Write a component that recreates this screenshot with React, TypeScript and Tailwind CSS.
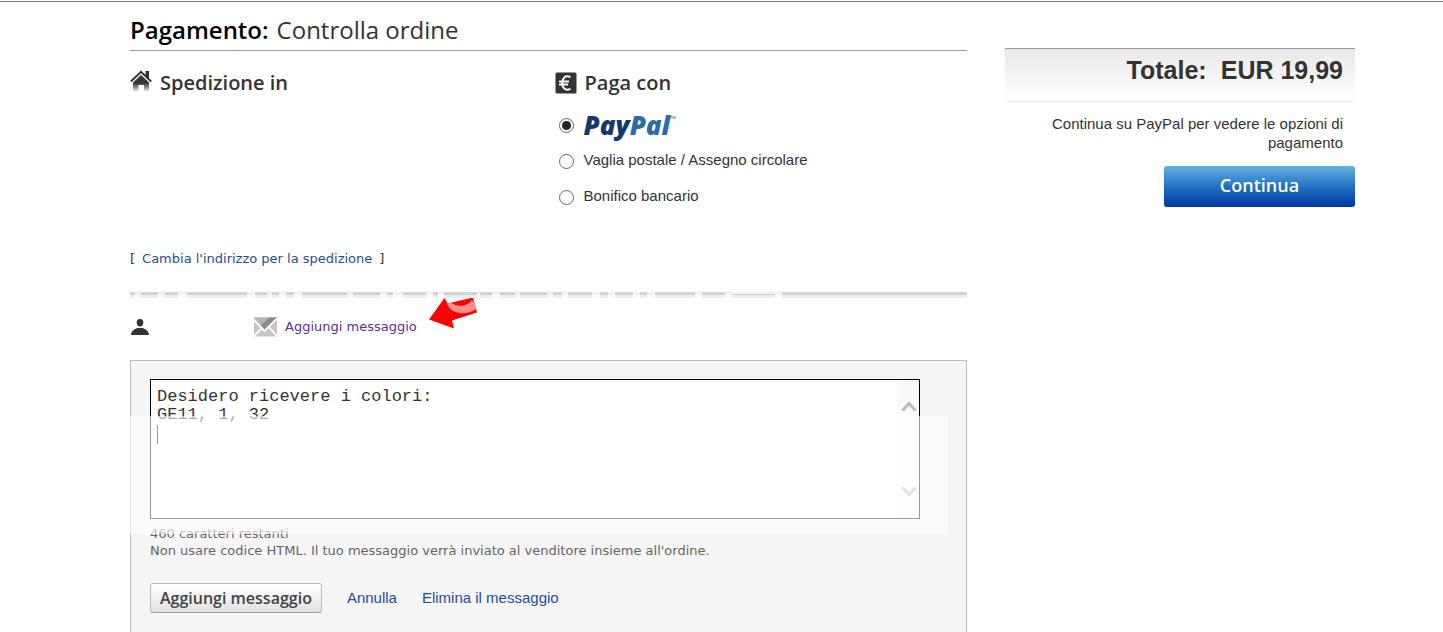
import React, { useState } from 'react';

const PAYMENTS = [
  { id: 'paypal', label: 'PayPal' },
  { id: 'vaglia', label: 'Vaglia postale / Assegno circolare' },
  { id: 'bonifico', label: 'Bonifico bancario' },
];

// light breaks along the divider: [start, width]
const BREAKS = [
  [5, 6], [28, 7], [48, 9], [117, 8], [137, 5], [149, 7], [164, 8], [217, 6],
  [250, 7], [263, 10], [296, 7], [308, 6], [347, 3], [362, 8], [385, 5], [417, 6],
  [432, 6], [462, 8], [478, 7], [503, 7], [517, 8], [565, 7], [595, 8], [645, 7],
];

const MAX_CHARS = 500;

function HouseIcon() {
  return (
    <svg width="22" height="22" viewBox="0 0 22 22" className="mb-1" aria-hidden="true">
      <defs>
        <linearGradient id="house" x1="0" y1="0" x2="0" y2="1">
          <stop offset="0.5" stopColor="#333" />
          <stop offset="1" stopColor="#333" stopOpacity="0.15" />
        </linearGradient>
      </defs>
      <path d="M11 5 19 12.500V21h-5v-6H8.500v6H3v-8.500z" fill="url(#house)" />
      <path d="M.8 11.500 11 1.800 21.200 11.500" fill="none" stroke="#333" strokeWidth="2" />
      <path d="M15.500 1H19v8l-3.500-3.300z" fill="#333" />
    </svg>
  );
}

function EuroIcon() {
  return (
    <svg width="22" height="22" viewBox="0 0 22 22" aria-hidden="true">
      <rect x="0.500" y="0.500" width="21" height="21" rx="1.500" fill="#333" />
      <path d="M15.500 5.200C10 2.500 7.200 6.500 7.200 11s2.800 8.500 8.300 5.800M4 9.500h10M4 12.500h9" fill="none" stroke="#fff" strokeWidth="2" />
    </svg>
  );
}

function PersonIcon() {
  return (
    <svg width="20" height="18" viewBox="0 0 20 18" aria-hidden="true">
      <path d="M10 1c2.300 0 3.300 1.400 3.300 3.400 0 2.200-1.400 4.200-3.300 4.200S6.700 6.600 6.700 4.400C6.700 2.400 7.700 1 10 1z" fill="#333" />
      <path d="M1 17c.5-4.500 3-5.500 6.500-7h5c3.500 1.500 6 2.500 6.500 7z" fill="#333" />
    </svg>
  );
}

function MailIcon() {
  return (
    <svg width="23" height="20" viewBox="0 0 23 20" aria-hidden="true">
      <rect width="23" height="19" y="0.500" fill="#c6c6c6" />
      <path d="M0 .5h23L11 13z" fill="#b4b4b4" />
      <path d="M23 .5 11 13 7 8.500 15 .5z" fill="#8a8a8a" />
      <path d="M0 3 10.500 14 23 1.500M0 19 8 11M23 19l-8-9" fill="none" stroke="#fff" strokeWidth="1.800" />
    </svg>
  );
}

function RedArrow() {
  return (
    <svg width="48" height="32" viewBox="0 0 48 32" aria-hidden="true">
      <path d="M0 22.500 15.500 1l3 5.500L44 .5l4 15L23 23.500l2 8z" fill="#f00" />
      <path d="M18 6.600c3 10 18 13 29 5.400L45.500 6.500 43 3c-4 6-14 8-21 2.800z" fill="#ff8f8f" />
    </svg>
  );
}

function PayPalLogo() {
  return (
    <span className="flex items-start font-['Open_Sans',sans-serif] text-[26px] leading-7 font-extrabold italic">
      <span className="text-[#14376f]">Pay</span>
      <span className="text-[#2a6ba8]">Pal</span>
      <span className="pt-1 text-[8px] leading-none font-normal not-italic text-[#2a6ba8]">™</span>
    </span>
  );
}

function Divider() {
  return (
    <div className="relative h-[6px] border-t-[3px] border-[#d3d3d3] bg-[#eeeeee]">
      <svg className="absolute -top-[3px] left-0" width="660" height="6" aria-hidden="true">
        {BREAKS.map(([x, w]) => (
          <rect key={x} x={x} width={w} height="6" fill="#fff" fillOpacity="0.7" />
        ))}
        <rect x="603" width="42" height="2" fill="#fff" fillOpacity="0.7" />
      </svg>
    </div>
  );
}

export default function App() {
  const [payment, setPayment] = useState('paypal');
  const [message, setMessage] = useState('Desidero ricevere i colori:\nGE11, 1, 32\n');

  return (
    <div className="mt-px border-t border-[#777] font-['Liberation_Sans',Arial,sans-serif] text-[15px] text-[#333]">
      <div className="flex items-start gap-[38px] pr-[88px] pl-[130px]">
        <main className="min-w-0 flex-1">
          <h1 className="flex gap-2 border-b border-[#999] pt-3 pb-1 font-['Open_Sans',sans-serif] text-2xl leading-8">
            <strong className="font-semibold text-black">Pagamento:</strong>
            <span>Controlla ordine</span>
          </h1>

          <div className="grid grid-cols-2 gap-3 pt-4">
            <section>
              <h2 className="flex items-center gap-2 font-['Open_Sans',sans-serif] text-xl leading-8 font-semibold">
                <HouseIcon />
                Spedizione in
              </h2>
            </section>
            <section>
              <h2 className="flex items-center gap-2 font-['Open_Sans',sans-serif] text-xl leading-8 font-semibold">
                <EuroIcon />
                Paga con
              </h2>
              <div className="pt-2 pl-1">
                {PAYMENTS.map((p) => (
                  <label key={p.id} className="flex h-9 items-center gap-[10px]">
                    <input
                      type="radio"
                      name="payment"
                      value={p.id}
                      checked={payment === p.id}
                      onChange={() => setPayment(p.id)}
                      className="flex size-[15px] shrink-0 appearance-none items-center justify-center rounded-full border border-[#666] bg-white before:size-[9px] before:rounded-full checked:before:bg-[#222]"
                    />
                    {p.id === 'paypal' ? <PayPalLogo /> : <span className="pb-[2px]">{p.label}</span>}
                  </label>
                ))}
              </div>
            </section>
          </div>

          <p className="flex gap-[7px] pt-[34px] pb-[23px] font-['DejaVu_Sans',Verdana,sans-serif] text-[13px] leading-5">
            [
            <a href="#indirizzo" className="text-[#1d4f91]">Cambia l'indirizzo per la spedizione</a>
            ]
          </p>

          <Divider />

          <div className="flex h-[62px] items-center pb-1 font-['DejaVu_Sans',Verdana,sans-serif] text-[13px]">
            <PersonIcon />
            <a href="#messaggio" className="ml-[104px] flex items-center gap-2 text-[#5e2f96]">
              <MailIcon />
              Aggiungi messaggio
            </a>
            <span className="ml-3 pb-7">
              <RedArrow />
            </span>
          </div>

          <section className="relative border border-b-0 border-[#bbb] bg-[#f5f5f5] px-[19px] pt-[18px] pb-5">
            <div className="relative mr-[27px]">
              <textarea
                aria-label="Messaggio per il venditore"
                value={message}
                maxLength={MAX_CHARS}
                onChange={(e) => setMessage(e.target.value)}
                className="block h-[140px] w-full resize-none border border-black bg-white py-2 pr-7 pl-[6px] font-['Liberation_Mono','Courier_New',monospace] text-[17px] leading-[18px] text-[#333] outline-none"
              />
              <div className="pointer-events-none absolute top-px right-px bottom-px flex w-[21px] flex-col items-center justify-between bg-[#f9f9f9] py-5">
                <svg width="16" height="12" viewBox="0 0 16 12" aria-hidden="true">
                  <path d="M1.500 10.500 8 3.500l6.500 7" fill="none" stroke="#bbb" strokeWidth="3" />
                </svg>
                <svg width="16" height="12" viewBox="0 0 16 12" aria-hidden="true">
                  <path d="M1.500 1.500 8 8.500l6.500-7" fill="none" stroke="#bbb" strokeWidth="3" />
                </svg>
              </div>
              <span className="pointer-events-none absolute top-[46px] left-[7px] h-[19px] w-px bg-black" />
            </div>

            <div className="pt-[6px] font-['DejaVu_Sans',Verdana,sans-serif] text-[13px] leading-[17px] text-[#666]">
              <p>460 caratteri restanti</p>
              <p>Non usare codice HTML. Il tuo messaggio verrà inviato al venditore insieme all'ordine.</p>
            </div>

            <div className="flex items-center gap-[25px] pt-6">
              <button
                type="button"
                className="h-[30px] rounded-[3px] border border-[#bbb] border-b-[#999] bg-linear-to-b from-white to-[#e2e2e2] px-[9px] font-['Open_Sans',sans-serif] text-base leading-none font-semibold text-[#444]"
              >
                Aggiungi messaggio
              </button>
              <a href="#annulla" className="text-[#1d4f9f]">Annulla</a>
              <a href="#elimina" className="text-[#1d4f9f]">Elimina il messaggio</a>
            </div>

            <div className="pointer-events-none absolute top-[55px] right-[18px] -left-px h-[118px] bg-white/60" />
          </section>
        </main>

        <aside className="w-[350px] shrink-0 pt-[46px] text-right">
          <div className="flex h-[54px] items-center justify-end gap-[14px] border-t border-b border-t-[#999] border-b-[#eee] bg-linear-to-b from-[#e9e9e9] to-white pr-3 pb-2 text-[25px] font-bold">
            <span>Totale:</span>
            <span>EUR 19,99</span>
          </div>
          <p className="pt-3 pr-3 pb-[14px] pl-10 leading-[19px]">
            Continua su PayPal per vedere le opzioni di pagamento
          </p>
          <button
            type="button"
            className="h-[41px] w-[191px] rounded-[3px] bg-linear-to-b from-[#62b3de] via-[#2272c3] to-[#0435a2] pb-1 font-['Open_Sans',sans-serif] text-lg font-semibold text-white"
          >
            Continua
          </button>
        </aside>
      </div>
    </div>
  );
}
